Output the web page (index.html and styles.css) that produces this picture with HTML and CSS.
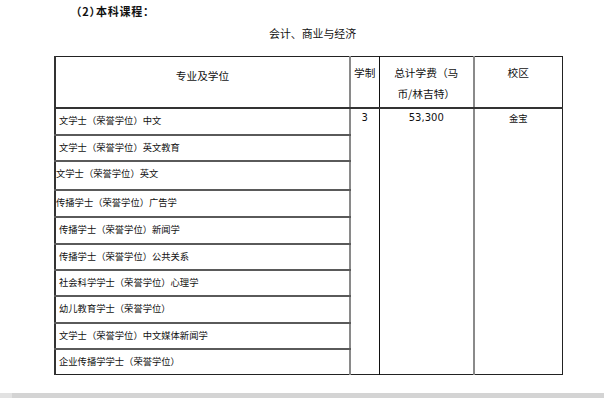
FILE: index.html
```html
<!DOCTYPE html>
<html lang="zh-CN">
<head>
<meta charset="utf-8">
<title>本科课程</title>
<link rel="stylesheet" href="styles.css">
</head>
<body>
<div class="page">
  <p class="title">（2）本科课程：</p>
  <p class="subtitle">会计、商业与经济</p>
  <table class="courses">
    <colgroup>
      <col class="c-major">
      <col class="c-years">
      <col class="c-fee">
      <col class="c-campus">
    </colgroup>
    <thead>
      <tr class="head">
        <th class="h-major">专业及学位</th>
        <th class="h-years">学制</th>
        <th class="h-fee">总计学费（马币/林吉特）</th>
        <th class="h-campus">校区</th>
      </tr>
    </thead>
    <tbody>
      <tr class="r1">
        <td class="major">文学士（荣誉学位）中文</td>
        <td class="years" rowspan="10">3</td>
        <td class="fee" rowspan="10">53,300</td>
        <td class="campus" rowspan="10">金宝</td>
      </tr>
      <tr class="r2"><td class="major">文学士（荣誉学位）英文教育</td></tr>
      <tr class="r3"><td class="major tight">文学士（荣誉学位）英文</td></tr>
      <tr class="r4"><td class="major tight">传播学士（荣誉学位）广告学</td></tr>
      <tr class="r5"><td class="major">传播学士（荣誉学位）新闻学</td></tr>
      <tr class="r6"><td class="major">传播学士（荣誉学位）公共关系</td></tr>
      <tr class="r7"><td class="major">社会科学学士（荣誉学位）心理学</td></tr>
      <tr class="r8"><td class="major">幼儿教育学士（荣誉学位）</td></tr>
      <tr class="r9"><td class="major">文学士（荣誉学位）中文媒体新闻学</td></tr>
      <tr class="r10"><td class="major">企业传播学学士（荣誉学位）</td></tr>
    </tbody>
  </table>
  <div class="pagebar"></div>
</div>
</body>
</html>
```
FILE: styles.css
```css
html, body {
  margin: 0;
  padding: 0;
  background: #ffffff;
}

body {
  font-family: "Noto Sans CJK SC", "Noto Sans", "DejaVu Sans", sans-serif;
  color: #111111;
}

.page {
  width: 614px;
  height: 398px;
  overflow: hidden;
}

.title {
  margin: 0 0 0 76px;
  padding-top: 3px;
  font-size: 11px;
  line-height: 16px;
  font-weight: 700;
  letter-spacing: 0.8px;
  font-feature-settings: "halt";
}

.subtitle {
  margin: 6px 0 0 269px;
  font-size: 10.9px;
  line-height: 16px;
}

.courses {
  margin: 15px 0 0 54px;
  width: 507px;
  border-collapse: collapse;
  table-layout: fixed;
  border: 1px solid #222222;
}

.c-major { width: 295px; }
.c-years { width: 29px; }
.c-fee { width: 95px; }
.c-campus { width: 88px; }

.courses tr.head { height: 51px; }

.courses th {
  font-size: 10.7px;
  font-weight: 400;
  line-height: 21px;
  vertical-align: top;
  text-align: center;
  padding: 5px 0 0 0;
  border-bottom: 2px solid #333333;
}

.courses th.h-major {
  padding-top: 8px;
  border-left: 2px solid #333333;
  border-right: 2px solid #8a8a8a;
}

.courses th.h-years {
  border-right: 1px solid #111111;
}

.courses th.h-fee {
  padding: 5px 14px 0 14px;
  border-right: 2px solid #8a8a8a;
}

.courses td {
  padding: 0;
  vertical-align: top;
}

.courses td.major {
  font-size: 9.3px;
  line-height: 14px;
  padding: 4px 0 0 3px;
  border-left: 2px solid #333333;
  border-bottom: 2px solid #5a5a5a;
  border-right: 2px solid #8a8a8a;
  white-space: nowrap;
}

.courses td.major.tight {
  padding-left: 0;
}

.courses tr.r10 td.major {
  border-bottom: 1px solid #222222;
}

.courses td.years,
.courses td.fee {
  font-family: "DejaVu Sans", "Noto Sans CJK SC", sans-serif;
  font-size: 10px;
  line-height: 14px;
  padding-top: 2px;
  text-align: center;
}

.courses td.years {
  border-right: 1px solid #111111;
}

.courses td.fee {
  border-right: 2px solid #8a8a8a;
}

.courses td.campus {
  font-size: 9.3px;
  line-height: 14px;
  padding-top: 2px;
  text-align: center;
}

.r1 { height: 27px; }
.r2 { height: 26px; }
.r3 { height: 29px; }
.r4 { height: 27px; }
.r5 { height: 27px; }
.r6 { height: 26px; }
.r7 { height: 26px; }
.r8 { height: 27px; }
.r9 { height: 26px; }
.r10 { height: 26px; }

.pagebar {
  margin-top: 18px;
  width: 604px;
  height: 5px;
  background: linear-gradient(to right, #e2e2e2 0, #e2e2e2 12px, #d4d4d4 12px, #d4d4d4 100%);
}
```
